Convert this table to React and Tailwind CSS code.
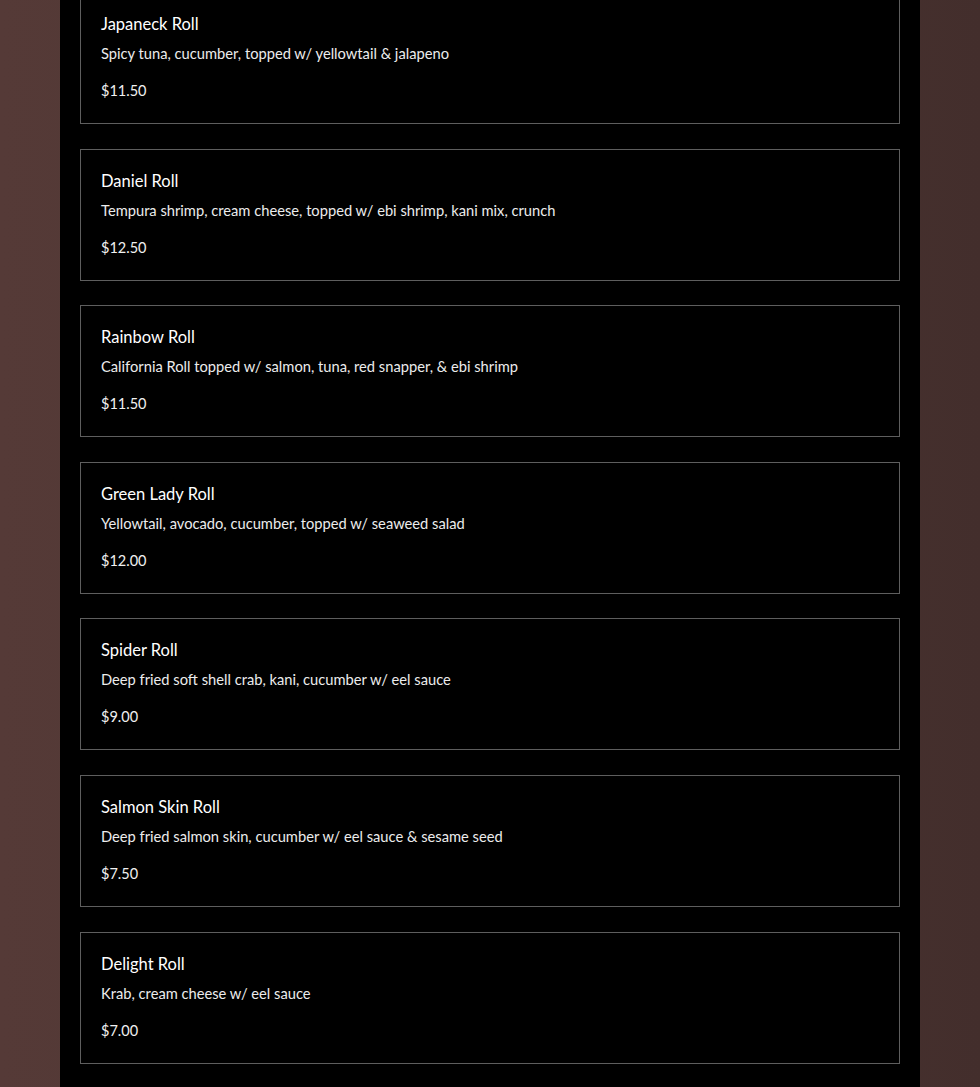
import React from "react";

const items = [
  { name: "Japaneck Roll", desc: "Spicy tuna, cucumber, topped w/ yellowtail & jalapeno", price: "$11.50" },
  { name: "Daniel Roll", desc: "Tempura shrimp, cream cheese, topped w/ ebi shrimp, kani mix, crunch", price: "$12.50" },
  { name: "Rainbow Roll", desc: "California Roll topped w/ salmon, tuna, red snapper, & ebi shrimp", price: "$11.50" },
  { name: "Green Lady Roll", desc: "Yellowtail, avocado, cucumber, topped w/ seaweed salad", price: "$12.00" },
  { name: "Spider Roll", desc: "Deep fried soft shell crab, kani, cucumber w/ eel sauce", price: "$9.00" },
  { name: "Salmon Skin Roll", desc: "Deep fried salmon skin, cucumber w/ eel sauce & sesame seed", price: "$7.50" },
  { name: "Delight Roll", desc: "Krab, cream cheese w/ eel sauce", price: "$7.00" },
];

export default function App() {
  return (
    <div
      className="w-[980px] h-[1087px] overflow-hidden bg-[linear-gradient(90deg,#553a37_0%,#4e3633_50%,#432e2c_100%)] flex justify-center"
      style={{ fontFamily: "Lato, 'Open Sans', sans-serif" }}
    >
      <div className="w-[860px] h-full bg-black px-5">
        <div className="-mt-[8px] flex flex-col gap-[24.6px]">
          {items.map((it) => (
            <div key={it.name} className="border border-[#5e5e5e] pl-5 pr-5 pt-[19px] pb-[20px]">
              <div className="text-[16.5px] leading-6 text-white font-normal">{it.name}</div>
              <div className="mt-[7px] text-[14.7px] leading-5 text-[#ececec] font-normal">{it.desc}</div>
              <div className="mt-[16px] text-[14.5px] leading-6 text-[#f0f0f0] font-normal">{it.price}</div>
            </div>
          ))}
        </div>
      </div>
    </div>
  );
}
